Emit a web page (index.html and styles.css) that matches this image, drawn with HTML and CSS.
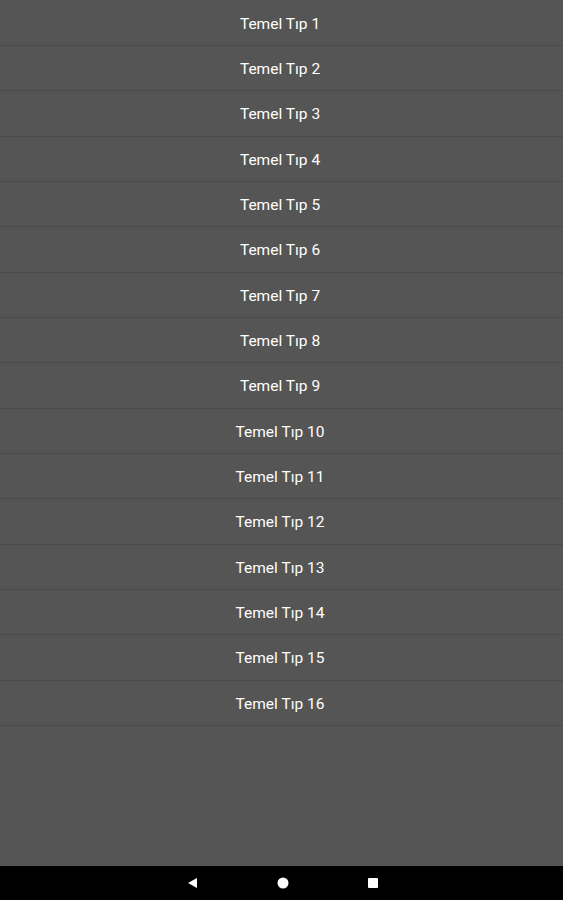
FILE: index.html
```html
<!DOCTYPE html>
<html lang="tr">
<head>
<meta charset="utf-8">
<link rel="stylesheet" href="styles.css">
</head>
<body>
<div class="screen">
  <ul class="list">
    <li class="row">Temel Tıp 1</li>
    <li class="row">Temel Tıp 2</li>
    <li class="row">Temel Tıp 3</li>
    <li class="row">Temel Tıp 4</li>
    <li class="row">Temel Tıp 5</li>
    <li class="row">Temel Tıp 6</li>
    <li class="row">Temel Tıp 7</li>
    <li class="row">Temel Tıp 8</li>
    <li class="row">Temel Tıp 9</li>
    <li class="row">Temel Tıp 10</li>
    <li class="row">Temel Tıp 11</li>
    <li class="row">Temel Tıp 12</li>
    <li class="row">Temel Tıp 13</li>
    <li class="row">Temel Tıp 14</li>
    <li class="row">Temel Tıp 15</li>
    <li class="row">Temel Tıp 16</li>
  </ul>
  <nav class="navbar">
    <svg class="nav-icon" width="12" height="12" viewBox="0 0 12 12"><polygon points="10,1 10,11 1,6" fill="#fff"/></svg>
    <svg class="nav-icon" width="12" height="12" viewBox="0 0 12 12"><circle cx="6" cy="6" r="5.5" fill="#fff"/></svg>
    <svg class="nav-icon" width="12" height="12" viewBox="0 0 12 12"><rect x="1" y="1" width="10" height="10" rx="1" fill="#fff"/></svg>
  </nav>
</div>
</body>
</html>
```

FILE: styles.css
```css
html, body {
  margin: 0;
  padding: 0;
  background: #555555;
}
.screen {
  width: 563px;
  height: 900px;
  display: flex;
  flex-direction: column;
  font-family: Roboto, "Noto Sans", sans-serif;
}
.list {
  list-style: none;
  margin: 0;
  padding: 0.667px 0 0;
  flex: 1;
}
.row {
  box-sizing: border-box;
  height: 45.333px;
  border-bottom: 1px solid #4a4a4a;
  display: flex;
  align-items: center;
  justify-content: center;
  color: #ffffff;
  font-size: 15.5px;
  padding-top: 2px;
  padding-right: 3px;
}
.navbar {
  height: 34px;
  background: #000000;
  display: flex;
  align-items: center;
  justify-content: center;
  gap: 78px;
  padding-left: 2px;
}
.nav-icon {
  display: block;
}
```
